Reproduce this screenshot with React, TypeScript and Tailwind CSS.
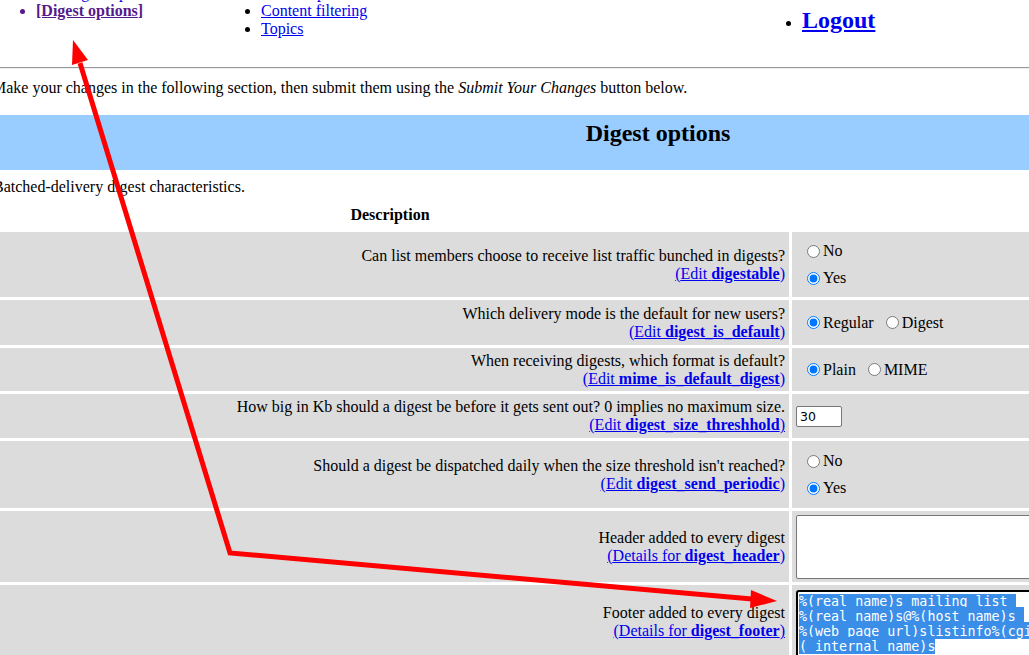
import type { ReactNode } from "react";

const Radio = ({ label, checked }: { label: string; checked?: boolean }) => (
  <label className="inline-flex h-[18px] items-center">
    <input
      type="radio"
      defaultChecked={checked}
      className="m-0 mr-[3px] h-[13px] w-[13px]"
    />
    {label}
  </label>
);

const EditLink = ({ verb, name }: { verb: string; name: string }) => (
  <a href="#" className="text-[#0000ee] underline">
    ({verb} <b>{name}</b>)
  </a>
);

type Row = {
  question: string;
  verb: string;
  name: string;
  height: string;
  value: ReactNode;
};

const FooterText = () => {
  const lines = [
    "%(real_name)s mailing list ",
    "%(real_name)s@%(host_name)s ",
    "%(web_page_url)slistinfo%(cgiext)s/%",
    "(_internal_name)s",
  ];
  return (
    <div className="h-[80px] w-[330px] overflow-hidden rounded-[3px] border-2 border-black bg-white px-px pt-[2px] font-['DejaVu_Sans_Mono',monospace] text-[13.333px] leading-[15px] whitespace-pre">
      {lines.map((line, i) => (
        <div key={i} className="h-[15px]">
          <span
            className={
              i === 0
                ? "bg-[#3b8ee8] text-white"
                : "bg-[#3b8ee8] pt-[2px] text-white"
            }
          >
            {line}
          </span>
        </div>
      ))}
    </div>
  );
};

const rows: Row[] = [
  {
    question: "Can list members choose to receive list traffic bunched in digests?",
    verb: "Edit",
    name: "digestable",
    height: "h-[65px]",
    value: (
      <div className="flex flex-col gap-[9px] pl-[15px]">
        <Radio label="No" />
        <Radio label="Yes" checked />
      </div>
    ),
  },
  {
    question: "Which delivery mode is the default for new users?",
    verb: "Edit",
    name: "digest_is_default",
    height: "h-[45px]",
    value: (
      <div className="flex gap-[12px] pl-[15px]">
        <Radio label="Regular" checked />
        <Radio label="Digest" />
      </div>
    ),
  },
  {
    question: "When receiving digests, which format is default?",
    verb: "Edit",
    name: "mime_is_default_digest",
    height: "h-[43px]",
    value: (
      <div className="flex gap-[12px] pl-[15px]">
        <Radio label="Plain" checked />
        <Radio label="MIME" />
      </div>
    ),
  },
  {
    question:
      "How big in Kb should a digest be before it gets sent out? 0 implies no maximum size.",
    verb: "Edit",
    name: "digest_size_threshhold",
    height: "h-[44px]",
    value: (
      <div className="pl-[4px]">
        <input
          type="text"
          defaultValue="30"
          className="h-[21px] w-[46px] rounded-[2px] border border-[#767676] bg-white px-[3px] font-['DejaVu_Sans',sans-serif] text-[12.5px] text-black"
        />
      </div>
    ),
  },
  {
    question: "Should a digest be dispatched daily when the size threshold isn't reached?",
    verb: "Edit",
    name: "digest_send_periodic",
    height: "h-[67px]",
    value: (
      <div className="flex flex-col gap-[9px] pl-[15px]">
        <Radio label="No" />
        <Radio label="Yes" checked />
      </div>
    ),
  },
  {
    question: "Header added to every digest",
    verb: "Details for",
    name: "digest_header",
    height: "h-[71px]",
    value: (
      <div className="pl-[4px]">
        <div className="h-[64px] w-[330px] rounded-[2px] border border-[#767676] bg-white" />
      </div>
    ),
  },
  {
    question: "Footer added to every digest",
    verb: "Details for",
    name: "digest_footer",
    height: "h-[74px]",
    value: (
      <div className="self-start pl-[4px] pt-[5px]">
        <FooterText />
      </div>
    ),
  },
];

const Nav = () => (
  <div className="-ml-[4px] -mt-[16px] flex h-[83px]">
    <ul className="w-[225px] list-disc pl-[40px]">
      <li>
        <a href="#" className="text-[#0000ee] underline">
          Non-digest options
        </a>
      </li>
      <li className="font-bold text-[#551a8b]">
        <a href="#" className="underline">
          [Digest options
        </a>
        ]
      </li>
    </ul>
    <ul className="w-[541px] list-disc pl-[40px]">
      <li>
        <a href="#" className="text-[#0000ee] underline">
          Auto-responder
        </a>
      </li>
      <li>
        <a href="#" className="text-[#0000ee] underline">
          Content filtering
        </a>
      </li>
      <li>
        <a href="#" className="text-[#0000ee] underline">
          Topics
        </a>
      </li>
    </ul>
    <ul className="list-disc pl-[40px] pt-[22px]">
      <li>
        <a href="#" className="text-[24px] leading-[28px] font-bold text-[#0000ee] underline">
          Logout
        </a>
      </li>
    </ul>
  </div>
);

const Arrows = () => (
  <svg
    className="pointer-events-none absolute inset-0"
    width="1029"
    height="655"
    viewBox="0 0 1029 655"
  >
    <polyline
      points="80,63 230,553 752,599"
      fill="none"
      stroke="#ff0000"
      strokeWidth="5"
      strokeLinejoin="miter"
    />
    <polygon points="73,40 88,60 72,65" fill="#ff0000" />
    <polygon points="777,601 751,590 750,608" fill="#ff0000" />
  </svg>
);

const App = () => {
  return (
    <div className="relative h-[655px] w-[1029px] overflow-hidden bg-white font-['Liberation_Serif',serif] text-[16px] leading-[18px] text-black">
      <Nav />
      <hr className="border-t border-b border-t-[#9a9a9a] border-b-[#eeeeee]" />
      <div className="-ml-[9px] w-[1334px]">
        <p className="mt-[10px] ml-[1px]">
          Make your changes in the following section, then submit them using the{" "}
          <em>Submit Your Changes</em> button below.
        </p>
        <div className="mt-[18px] h-[55px] bg-[#99ccff] pt-[4px] text-center text-[24px] leading-[28px] font-bold">
          Digest options
        </div>
        <p className="mt-[8px] ml-[2px]">Batched-delivery digest characteristics.</p>
        <div className="mt-[10px] flex gap-[3px] font-bold">
          <div className="w-[798px] text-center">Description</div>
          <div className="w-[533px] text-center">Value</div>
        </div>
        <div className="mt-[8px] flex flex-col gap-[3px]">
          {rows.map((row) => (
            <div key={row.name} className={`flex gap-[3px] ${row.height}`}>
              <div className="flex w-[798px] flex-col items-end justify-center bg-[#dcdcdc] pr-[4px] text-right">
                <span>{row.question}</span>
                <EditLink verb={row.verb} name={row.name} />
              </div>
              <div className="flex w-[533px] items-center bg-[#dcdcdc]">
                {row.value}
              </div>
            </div>
          ))}
        </div>
      </div>
      <Arrows />
    </div>
  );
};

export default App;
